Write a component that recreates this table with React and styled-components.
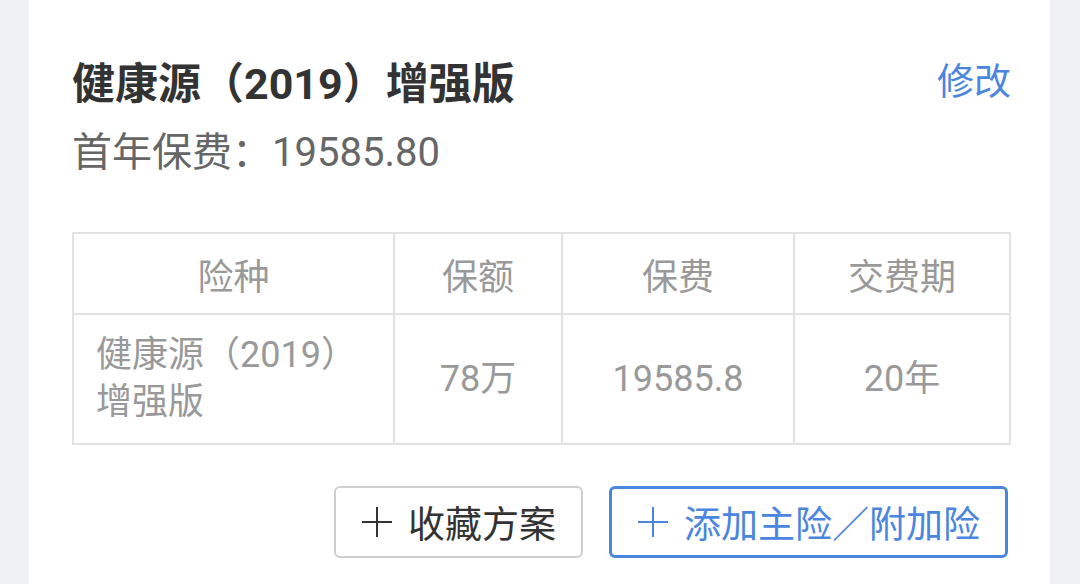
import React from 'react';
import styled, { createGlobalStyle } from 'styled-components';

const GlobalStyle = createGlobalStyle`
  html, body {
    margin: 0;
    padding: 0;
    background: #eef0f4;
  }
  body {
    font-family: Roboto, "Noto Sans CJK SC", sans-serif;
  }
`;

const Page = styled.div`
  display: flex;
  height: 584px;
  padding: 0 31px 0 29px;
  overflow: hidden;
`;

const Card = styled.div`
  flex: 1;
  display: flex;
  flex-direction: column;
  background: #fff;
  padding: 57px 39px 0 43px;
`;

const TitleRow = styled.div`
  display: flex;
  justify-content: space-between;
  align-items: flex-start;
`;

const Title = styled.h3`
  margin: 0;
  font-size: 43px;
  line-height: 55px;
  font-weight: 700;
  color: #333;
`;

const EditLink = styled.a`
  font-size: 37px;
  line-height: 50px;
  margin-top: 1px;
  color: #4a86e0;
  cursor: pointer;
`;

const Premium = styled.p`
  margin: 15px 0 0;
  font-size: 40px;
  line-height: 52px;
  color: #666;
`;

const Table = styled.table`
  margin-top: 53px;
  width: 100%;
  table-layout: fixed;
  border-collapse: collapse;
  border: 2px solid #e2e2e2;
`;

const HeadCell = styled.th`
  height: 79px;
  padding: 0;
  border: 2px solid #e2e2e2;
  font-size: 36px;
  font-weight: 400;
  color: #999;
  text-align: center;
`;

const Cell = styled.td`
  height: 128px;
  padding: 0 ${(p) => (p.$left ? '22px' : '0')};
  border: 2px solid #e2e2e2;
  font-size: 36px;
  line-height: 47px;
  color: #999;
  text-align: ${(p) => (p.$left ? 'left' : 'center')};
`;

const Actions = styled.div`
  display: flex;
  justify-content: flex-end;
  gap: 26px;
  margin: 41px 3px 0 0;
`;

const Button = styled.button`
  display: flex;
  align-items: center;
  gap: 15px;
  height: 72px;
  box-sizing: border-box;
  padding: 0 25px;
  border: ${(p) => (p.$primary ? '3px solid #4a86e0' : '2px solid #cfcfcf')};
  border-radius: 6px;
  background: #fff;
  font-family: inherit;
  font-size: 37px;
  color: ${(p) => (p.$primary ? '#4a86e0' : '#333')};
`;

const Plus = ({ color }) => (
  <svg width="32" height="32" viewBox="0 0 32 32">
    <line x1="16" y1="1" x2="16" y2="31" stroke={color} strokeWidth="2" />
    <line x1="1" y1="16" x2="31" y2="16" stroke={color} strokeWidth="2" />
  </svg>
);

const columns = ['险种', '保额', '保费', '交费期'];
const widths = [321, 168, 232, 216];

export default function App() {
  return (
    <>
      <GlobalStyle />
      <Page>
        <Card>
          <TitleRow>
            <Title>健康源（2019）增强版</Title>
            <EditLink>修改</EditLink>
          </TitleRow>
          <Premium>首年保费：19585.80</Premium>
          <Table>
            <colgroup>
              {widths.map((w, i) => (
                <col key={i} style={{ width: w }} />
              ))}
            </colgroup>
            <thead>
              <tr>
                {columns.map((c) => (
                  <HeadCell key={c}>{c}</HeadCell>
                ))}
              </tr>
            </thead>
            <tbody>
              <tr>
                <Cell $left>
                  健康源（2019）
                  <br />
                  增强版
                </Cell>
                <Cell>78万</Cell>
                <Cell>19585.8</Cell>
                <Cell>20年</Cell>
              </tr>
            </tbody>
          </Table>
          <Actions>
            <Button>
              <Plus color="#333" />
              收藏方案
            </Button>
            <Button $primary>
              <Plus color="#4a86e0" />
              添加主险／附加险
            </Button>
          </Actions>
        </Card>
      </Page>
    </>
  );
}
